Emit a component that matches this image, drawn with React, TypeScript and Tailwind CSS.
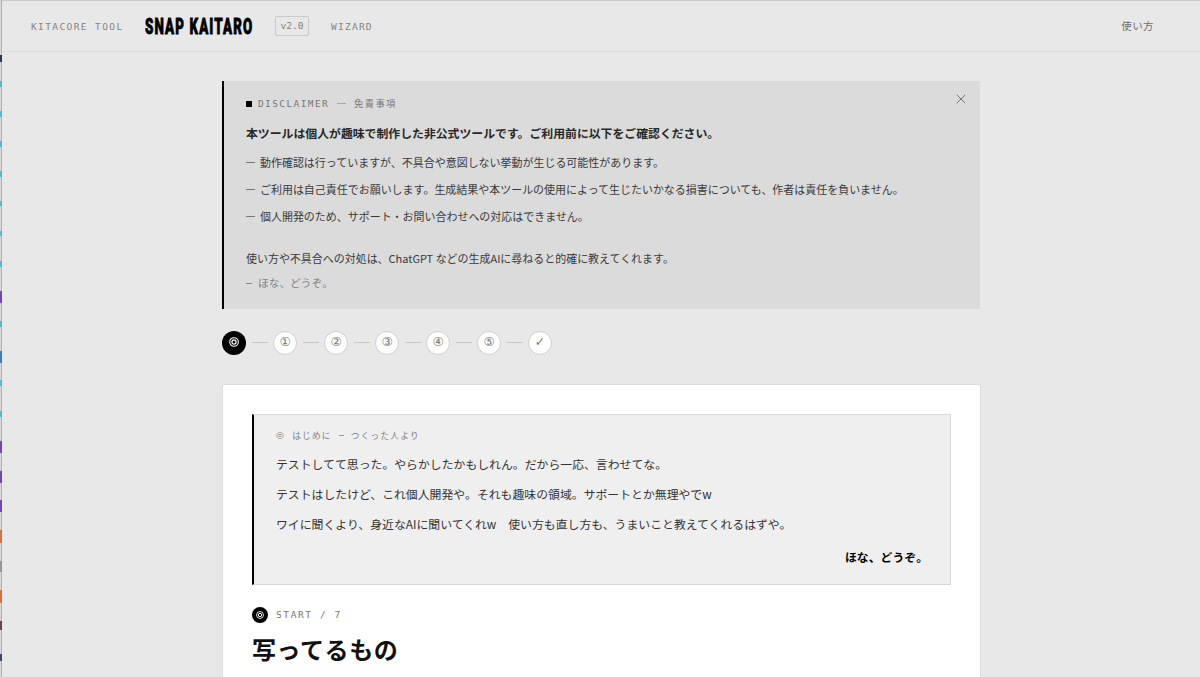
import React from "react";

const mono = "font-['DejaVu_Sans_Mono','Noto_Sans_CJK_JP',monospace]";

const edgeMarks: { y: number; h: number; color: string }[] = [
  { y: 55, h: 7, color: "#1b2238" },
  { y: 81, h: 6, color: "#45b4cc" },
  { y: 111, h: 6, color: "#45b4cc" },
  { y: 141, h: 6, color: "#45b4cc" },
  { y: 171, h: 6, color: "#45b4cc" },
  { y: 201, h: 5, color: "#45b4cc" },
  { y: 231, h: 5, color: "#45b4cc" },
  { y: 261, h: 6, color: "#45b4cc" },
  { y: 291, h: 12, color: "#6234a0" },
  { y: 321, h: 6, color: "#45b4cc" },
  { y: 351, h: 12, color: "#2b71bd" },
  { y: 380, h: 6, color: "#45b4dc" },
  { y: 411, h: 6, color: "#45b4cc" },
  { y: 441, h: 12, color: "#6234a0" },
  { y: 471, h: 12, color: "#6234a0" },
  { y: 500, h: 12, color: "#6234a0" },
  { y: 530, h: 13, color: "#cc6534" },
  { y: 561, h: 11, color: "#948c88" },
  { y: 590, h: 13, color: "#cc6534" },
  { y: 621, h: 9, color: "#583038" },
  { y: 654, h: 7, color: "#253350" },
];

function Edge() {
  return (
    <svg width="2" height="677" className="block shrink-0" shapeRendering="crispEdges">
      <rect width="1" height="677" fill="#d8d8d8" />
      <rect x="1" width="1" height="677" fill="#b0b0b0" />
      {edgeMarks.map((m) => (
        <rect key={m.y} y={m.y} width="2" height={m.h} fill={m.color} opacity="0.85" />
      ))}
    </svg>
  );
}

function Bullseye({ size }: { size: number }) {
  return (
    <svg width={size} height={size} viewBox="0 0 10 10" fill="none" stroke="currentColor" className="block">
      <circle cx="5" cy="5" r="4.3" strokeWidth="1.1" />
      <circle cx="5" cy="5" r="2.1" strokeWidth="1.2" />
    </svg>
  );
}

function Header() {
  return (
    <header className="flex h-[52px] items-center border-t border-b border-t-[#c9c9c9] border-b-[#dadada] pl-[29px] pr-[46px]">
      <span className={`${mono} w-[114px] whitespace-nowrap pt-[2px] text-[9.5px] tracking-[1.4px] text-[#858585]`}>KITACORE TOOL</span>
      <h1 className="w-[130px] text-black">
        <svg width="110" height="24" viewBox="0 0 110 24" className="block">
          <text
            x="0"
            y="20"
            transform="scale(0.62 1)"
            textLength="173"
            lengthAdjust="spacing"
            className="fill-black stroke-black stroke-[0.8px] font-['Roboto',sans-serif] text-[21.5px] font-black"
          >
            SNAP KAITARO
          </text>
        </svg>
      </h1>
      <span className={`${mono} flex h-[20px] w-[34px] items-center justify-center rounded-[2px] border border-[#cacaca] pt-px text-[9.5px] text-[#808080]`}>v2.0</span>
      <span className={`${mono} ml-[22px] pt-[2px] text-[9.5px] tracking-[1.25px] text-[#858585]`}>WIZARD</span>
      <a className="ml-auto text-[10.5px] tracking-[0.4px] text-[#707070]">使い方</a>
    </header>
  );
}

const notes = [
  "動作確認は行っていますが、不具合や意図しない挙動が生じる可能性があります。",
  "ご利用は自己責任でお願いします。生成結果や本ツールの使用によって生じたいかなる損害についても、作者は責任を負いません。",
  "個人開発のため、サポート・お問い合わせへの対応はできません。",
];

function Disclaimer() {
  return (
    <section className="flex h-[228px] justify-between border-l-2 border-black bg-[#dbdbdb] pl-[22px] pr-[14px] pt-[13px]">
      <div className="whitespace-nowrap text-[10.97px] text-[#3a3a3a]">
        <div className={`${mono} flex h-[19px] items-center text-[9.5px] text-[#777]`}>
          <span className="mr-[6px] size-[6px] bg-black" />
          <span className="w-[79px] pt-px tracking-[1.4px]">DISCLAIMER</span>
          <span className="mr-[8px] h-px w-[9px] bg-[#a8a8a8]" />
          <span className="font-['Noto_Sans_CJK_JP',sans-serif] text-[9.3px] tracking-[1.4px]">免責事項</span>
        </div>
        <p className="mt-[10px] h-[20px] text-[11.86px] leading-[20px] font-bold text-[#282828]">
          本ツールは個人が趣味で制作した非公式ツールです。ご利用前に以下をご確認ください。
        </p>
        <ul className="mt-[6px]">
          {notes.map((n) => (
            <li key={n} className="flex h-[27px] items-center">
              <span className="mr-[5px] h-px w-[9px] bg-[#777]" />
              {n}
            </li>
          ))}
        </ul>
        <p className="mt-[15px] h-[26px] leading-[26px]">使い方や不具合への対処は、ChatGPT などの生成AIに尋ねると的確に教えてくれます。</p>
        <p className="flex h-[24px] items-center text-[10.7px] text-[#808080]">
          <span className="mr-[6px] h-px w-[6px] bg-[#888]" />
          ほな、どうぞ。
        </p>
      </div>
      <button aria-label="閉じる" className="h-[10px] w-[10px]">
        <svg width="10" height="10" viewBox="0 0 10 10" fill="none" stroke="#777" strokeWidth="1" className="block">
          <path d="M.8.8l8.4 8.4M9.2.8.8 9.2" />
        </svg>
      </button>
    </section>
  );
}

function Stepper() {
  const steps = ["①", "②", "③", "④", "⑤", "✓"];
  return (
    <nav className="mt-[22px] flex h-[24px] items-center font-['DejaVu_Sans',sans-serif]">
      <span className="flex size-[24px] items-center justify-center rounded-full bg-black pb-[2px] text-white">
        <Bullseye size={10} />
      </span>
      {steps.map((s) => (
        <React.Fragment key={s}>
          <span className="mx-[5.5px] mb-px h-px w-[16px] bg-[#c6c6c6]" />
          <span className="flex size-[24px] items-center justify-center rounded-full border border-[#cfcfcf] bg-white pb-[2px] text-[12.5px] leading-none text-[#777]">{s}</span>
        </React.Fragment>
      ))}
    </nav>
  );
}

function Intro() {
  return (
    <section className="h-[171px] w-[699px] whitespace-nowrap border border-l-2 border-[#d8d8d8] border-l-black bg-[#efefef] pl-[22px] pr-[22px] pt-[11px] text-[11.86px] text-[#333]">
      <p className="flex h-[18px] items-center text-[8.6px] tracking-[1.3px] text-[#808080]">
        <span className="mr-[7px] font-['DejaVu_Sans',sans-serif] text-[9px] leading-none">◎</span>
        <span>はじめに</span>
        <span className="mx-[7px] h-px w-[5px] bg-[#999]" />
        <span>つくった人より</span>
      </p>
      <div className="mt-[5px] leading-[30px]">
        <p>テストしてて思った。やらかしたかもしれん。だから一応、言わせてな。</p>
        <p>テストはしたけど、これ個人開発や。それも趣味の領域。サポートとか無理やでw</p>
        <p>ワイに聞くより、身近なAIに聞いてくれw　使い方も直し方も、うまいこと教えてくれるはずや。</p>
      </div>
      <p className="mt-[8px] text-right leading-[20px] font-bold text-black">ほな、どうぞ。</p>
    </section>
  );
}

export default function App() {
  return (
    <div className="flex h-[677px] w-[1200px] overflow-hidden bg-[#e8e8e8] font-['Noto_Sans_CJK_JP',sans-serif]">
      <Edge />
      <div className="flex-1">
        <Header />
        <main className="ml-[220px] mt-[29px] w-[758px]">
          <Disclaimer />
          <Stepper />
          <section className="mt-[29px] h-[320px] w-[759px] rounded-t-[2px] border border-[#dcdcdc] bg-white px-[29px] pt-[29px]">
            <Intro />
            <div className="mt-[21px] flex h-[18px] items-center">
              <span className="flex size-[16px] items-center justify-center rounded-full bg-black text-white">
                <Bullseye size={8} />
              </span>
              <span className={`${mono} ml-[8px] pt-px text-[9.5px] tracking-[1.6px] text-[#777]`}>START / 7</span>
            </div>
            <h2 className="mt-[7px] text-[24px] leading-[36px] font-bold tracking-[0.6px] text-[#111]">写ってるもの</h2>
          </section>
        </main>
      </div>
    </div>
  );
}
